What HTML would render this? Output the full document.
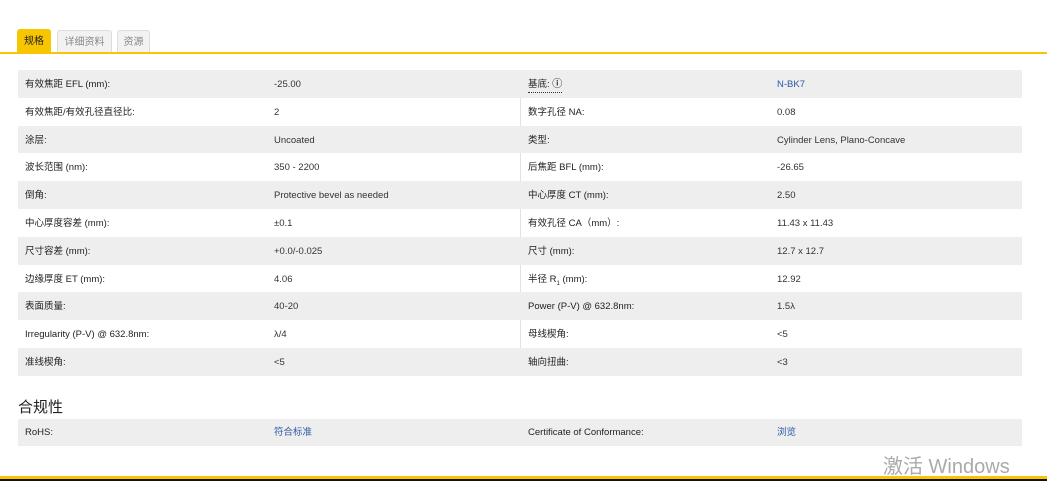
<!DOCTYPE html>
<html><head><meta charset="utf-8"><style>
*{margin:0;padding:0;box-sizing:border-box}
body{width:1047px;height:481px;background:#fff;font-family:"Liberation Sans","Noto Sans CJK SC",sans-serif;position:relative;overflow:hidden;color:#222}
.tab{position:absolute;font-size:10px;text-align:center;line-height:26px;border-radius:3px 3px 0 0}
.t1{left:17px;top:29px;width:34px;height:24px;background:#f7c600;color:#222}
.t2{left:57px;top:30px;width:55px;height:23px;background:#f2f2f2;border:1px solid #ddd;border-bottom:none;color:#888;line-height:24px}
.t3{left:117px;top:30px;width:33px;height:23px;background:#f2f2f2;border:1px solid #ddd;border-bottom:none;color:#888;line-height:24px}
.yl{position:absolute;left:0;top:52px;width:1047px;height:2px;background:#f7c600}
.tbl{position:absolute;left:18px;top:70px;width:1004px}
.row{height:27.8px;position:relative;font-size:9.5px;line-height:29px}
.row.g{background:#eee}
.row span{position:absolute;top:0;white-space:nowrap}
.a{left:7px;color:#222}.b{left:256px;color:#333}.c{left:510px;color:#222}.d{left:759px;color:#333}
.vd{position:absolute;left:502px;top:0;width:1px;height:100%;background:#e2e2e2}
.lk{color:#2a5aa8!important}
h3{position:absolute;left:18px;top:396px;font-size:15px;font-weight:normal;color:#222}
.win{position:absolute;left:883px;top:450px;font-size:20px;color:#aaa}
.by{position:absolute;left:0;top:476px;width:1047px;height:3px;background:#f7c600}
.bk{position:absolute;left:0;top:479px;width:1047px;height:2px;background:#111}
sub{font-size:6px}
</style></head><body>
<div class="tab t1">规格</div><div class="tab t2">详细资料</div><div class="tab t3">资源</div>
<div class="yl"></div>
<div class="tbl">
<div class="vd"></div>
<div class="row g"><span class="a">有效焦距 EFL (mm):</span><span class="b">-25.00</span><span class="c" style="border-bottom:1px dotted #333;line-height:14px;top:8px">基底: <b style="font-size:10px">ⓘ</b></span><span class="d lk">N-BK7</span></div>
<div class="row"><span class="a">有效焦距/有效孔径直径比:</span><span class="b">2</span><span class="c">数字孔径 NA:</span><span class="d">0.08</span></div>
<div class="row g"><span class="a">涂层:</span><span class="b">Uncoated</span><span class="c">类型:</span><span class="d">Cylinder Lens, Plano-Concave</span></div>
<div class="row"><span class="a">波长范围 (nm):</span><span class="b">350 - 2200</span><span class="c">后焦距 BFL (mm):</span><span class="d">-26.65</span></div>
<div class="row g"><span class="a">倒角:</span><span class="b">Protective bevel as needed</span><span class="c">中心厚度 CT (mm):</span><span class="d">2.50</span></div>
<div class="row"><span class="a">中心厚度容差 (mm):</span><span class="b">±0.1</span><span class="c">有效孔径 CA（mm）:</span><span class="d">11.43 x 11.43</span></div>
<div class="row g"><span class="a">尺寸容差 (mm):</span><span class="b">+0.0/-0.025</span><span class="c">尺寸 (mm):</span><span class="d">12.7 x 12.7</span></div>
<div class="row"><span class="a">边缘厚度 ET (mm):</span><span class="b">4.06</span><span class="c">半径 R<sub>1</sub> (mm):</span><span class="d">12.92</span></div>
<div class="row g"><span class="a">表面质量:</span><span class="b">40-20</span><span class="c">Power (P-V) @ 632.8nm:</span><span class="d">1.5λ</span></div>
<div class="row"><span class="a">Irregularity (P-V) @ 632.8nm:</span><span class="b">λ/4</span><span class="c">母线楔角:</span><span class="d">&lt;5</span></div>
<div class="row g"><span class="a">准线楔角:</span><span class="b">&lt;5</span><span class="c">轴向扭曲:</span><span class="d">&lt;3</span></div>
</div>
<h3>合规性</h3>
<div class="tbl" style="top:419px">
<div class="vd"></div>
<div class="row g" style="height:27px;line-height:28px"><span class="a">RoHS:</span><span class="b lk">符合标准</span><span class="c">Certificate of Conformance:</span><span class="d lk">浏览</span></div>
</div>
<div class="win">激活 Windows</div>
<div class="by"></div><div class="bk"></div>
</body></html>
